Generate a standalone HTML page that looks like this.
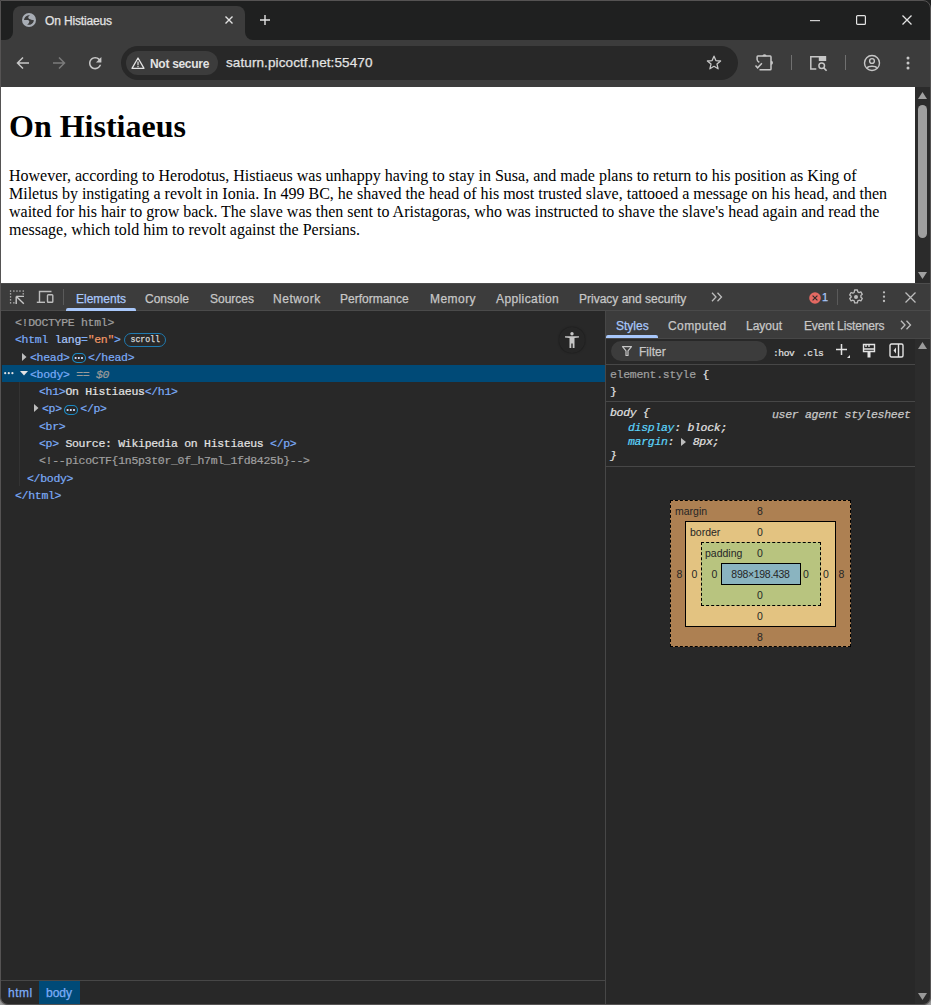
<!DOCTYPE html>
<html><head><meta charset="utf-8">
<style>
*{box-sizing:border-box;margin:0;padding:0}
html,body{width:931px;height:1005px;overflow:hidden;background:#1f2020;font-family:"Liberation Sans",sans-serif}
.a{position:absolute}
.t{position:absolute;white-space:nowrap;line-height:1;-webkit-text-stroke:0.25px currentColor}
.mono{font-family:"Liberation Mono",monospace}
svg{position:absolute;overflow:visible}
.bm{position:absolute;font-size:10.5px;line-height:11px;color:#262626;white-space:nowrap}.bm.c{transform:translateX(-50%)}
.row{position:absolute;height:17px;line-height:17px;white-space:pre;-webkit-text-stroke:0.2px currentColor}
.tg{color:#7cacf8}.an{color:#a8c7fa}.av{color:#f29766}.tx{color:#e3e3e3}.dt{color:#a0a0a0}.eq{color:#9a9a9a;font-style:italic}
.sp{display:inline-block;width:18.5px}
.ell{display:inline-block;position:relative;width:13.5px;height:9px;border:1px solid #1a7ab3;border-radius:4.5px;vertical-align:-1px;margin:0 1.6px 0 3px}.ell:after{content:"";position:absolute;left:2.6px;top:3.2px;width:1.7px;height:1.7px;background:#d0d0d0;box-shadow:2.7px 0 #d0d0d0,5.4px 0 #d0d0d0}
</style></head><body>
<!-- window border -->
<div class="a" style="left:0;top:0;width:931px;height:1005px;border:1px solid #555353;border-radius:0 8px 8px 8px;z-index:50;pointer-events:none"></div>
<div class="a" style="left:0;top:997px;width:8px;height:8px;z-index:60;background:radial-gradient(circle at 100% 0,transparent 6.8px,#555353 7.6px,#8f8f8f 8.6px,#a0a0a0 10px)"></div>
<div class="a" style="left:923px;top:997px;width:8px;height:8px;z-index:60;background:radial-gradient(circle at 0 0,transparent 6.8px,#555353 7.6px,#8f8f8f 8.6px,#a0a0a0 10px)"></div>

<!-- TAB STRIP -->
<div class="a" style="left:0;top:0;width:931px;height:40px;background:#1f2020"></div>
<!-- active tab -->
<div class="a" style="left:13px;top:6px;width:232px;height:34px;background:#3c3c3c;border-radius:8px 8px 0 0"></div>
<!-- flares -->
<div class="a" style="left:1px;top:28px;width:12px;height:12px;background:#3c3c3c"></div>
<div class="a" style="left:1px;top:24px;width:12px;height:16px;background:#1f2020;border-radius:0 0 8px 0"></div>
<div class="a" style="left:245px;top:28px;width:12px;height:12px;background:#3c3c3c"></div>
<div class="a" style="left:245px;top:24px;width:12px;height:16px;background:#1f2020;border-radius:0 0 0 8px"></div>
<!-- globe -->
<svg style="left:20px;top:11px" width="18" height="18" viewBox="0 0 18 18">
 <circle cx="9" cy="9" r="7" fill="#a8adb5"/>
 <path d="M4 8.9C4.5 6.5 6.3 4.2 10 4.1C8.9 5 8.2 5.8 8.3 6.8C8.6 7.9 10 8.3 11.2 8.7C12.2 9 13.2 9.1 13.9 9.2C13.7 11.2 12.3 12.9 10.2 13.8L7.1 13.8C8.4 12.9 9.3 11.6 9.3 10.6C9.2 9.6 8.3 9.1 7.4 9.1Z" fill="#3c3c3c"/>
</svg>
<div class="t" style="left:45px;top:14.6px;font-size:12px;letter-spacing:-0.15px;color:#e3e3e3">On Histiaeus</div>
<!-- tab close -->
<svg style="left:225px;top:16px" width="8" height="8" viewBox="0 0 8 8"><path d="M0.5 0.5L7.5 7.5M7.5 0.5L0.5 7.5" stroke="#e3e3e3" stroke-width="1.4"/></svg>
<!-- new tab plus -->
<svg style="left:260px;top:15px" width="10" height="10" viewBox="0 0 10 10"><path d="M5 0V10M0 5H10" stroke="#e3e3e3" stroke-width="1.4"/></svg>
<!-- window controls -->
<svg style="left:810px;top:19.5px" width="10" height="2"><rect width="10" height="1.2" fill="#cfcfcf"/></svg>
<svg style="left:856px;top:15px" width="10" height="10"><rect x="0.6" y="0.6" width="8.8" height="8.8" rx="1" fill="none" stroke="#e3e3e3" stroke-width="1.2"/></svg>
<svg style="left:902px;top:15px" width="10" height="10"><path d="M0.5 0.5L9.5 9.5M9.5 0.5L0.5 9.5" stroke="#e3e3e3" stroke-width="1.3"/></svg>

<!-- TOOLBAR -->
<div class="a" style="left:0;top:40px;width:931px;height:47px;background:#3c3c3c"></div>
<!-- back -->
<svg style="left:16px;top:56px" width="14" height="14" viewBox="0 0 14 14"><path d="M13 7H1.5M7 1.5L1.5 7L7 12.5" fill="none" stroke="#c7c7c7" stroke-width="1.5"/></svg>
<!-- forward -->
<svg style="left:52px;top:56px" width="14" height="14" viewBox="0 0 14 14"><path d="M1 7H12.5M7 1.5L12.5 7L7 12.5" fill="none" stroke="#7b7b7b" stroke-width="1.5"/></svg>
<!-- reload -->
<svg style="left:88.9px;top:57.3px" width="12.4" height="12.4" viewBox="4 4 16 16"><path d="M17.65 6.35C16.2 4.9 14.21 4 12 4c-4.42 0-7.99 3.58-7.99 8s3.57 8 7.99 8c3.73 0 6.84-2.55 7.73-6h-2.08c-.82 2.33-3.04 4-5.65 4-3.31 0-6-2.69-6-6s2.69-6 6-6c1.66 0 3.14.69 4.22 1.78L13 11h7V4l-2.35 2.35z" fill="#c7c7c7"/></svg>
<!-- omnibox -->
<div class="a" style="left:121px;top:46px;width:617px;height:34px;background:#282828;border-radius:17px"></div>
<div class="a" style="left:126px;top:51px;width:92px;height:24px;background:#3c3c3c;border-radius:12px"></div>
<svg style="left:131px;top:57px" width="14" height="12" viewBox="0 0 14 12"><path d="M7 1L13 11.3H1Z" fill="none" stroke="#e3e3e3" stroke-width="1.3" stroke-linejoin="round"/><rect x="6.4" y="4.5" width="1.2" height="3.8" fill="#e3e3e3"/><rect x="6.4" y="9" width="1.2" height="1.2" fill="#e3e3e3"/></svg>
<div class="t" style="left:150px;top:57.7px;font-size:12px;letter-spacing:-0.3px;font-weight:bold;color:#e3e3e3;-webkit-text-stroke:0">Not secure</div>
<div class="t" style="left:226px;top:56.1px;font-size:13.5px;letter-spacing:0.1px;color:#e3e3e3">saturn.picoctf.net:55470</div>
<!-- star -->
<svg style="left:706px;top:55px" width="16" height="16" viewBox="0 0 16 16"><path d="M8 1.2L9.9 5.6L14.6 6L11 9.1L12.1 13.8L8 11.3L3.9 13.8L5 9.1L1.4 6L6.1 5.6Z" fill="none" stroke="#c7c7c7" stroke-width="1.3" stroke-linejoin="round"/></svg>
<!-- extension puzzle -->
<svg style="left:750px;top:50px" width="30" height="26" viewBox="0 0 30 26"><path d="M9.3 12.4C8 11.6 7.1 10.8 7.1 9.5V6.9Q7.1 6.1 7.9 6.1H20.2Q21 6.1 21 6.9V18.9Q21 19.7 20.2 19.7H9.5" fill="none" stroke="#c7c7c7" stroke-width="1.5"/><path d="M12.4 6.3A2.1 2.1 0 0 1 16.6 6.3Z" fill="#c7c7c7"/><path d="M20.9 10.7A2.1 2.1 0 0 1 20.9 14.9Z" fill="#c7c7c7"/><path d="M5.5 15.5L7.6 17.8L11.9 13.3" fill="none" stroke="#c7c7c7" stroke-width="1.5"/></svg>
<div class="a" style="left:791px;top:55px;width:1px;height:15px;background:#707070"></div>
<!-- cast/search -->
<svg style="left:804px;top:50px" width="30" height="26" viewBox="0 0 30 26"><path d="M12.3 19H6.8V6.8H22" fill="none" stroke="#c7c7c7" stroke-width="1.5"/><rect x="14.8" y="6.1" width="7.4" height="4.9" fill="#c7c7c7"/><circle cx="17.7" cy="15.8" r="2.8" fill="none" stroke="#c7c7c7" stroke-width="1.5"/><path d="M19.8 17.9L22.6 20.7" stroke="#c7c7c7" stroke-width="1.6"/></svg>
<div class="a" style="left:845px;top:55px;width:1px;height:15px;background:#707070"></div>
<!-- profile -->
<svg style="left:863px;top:54px" width="18" height="18" viewBox="0 0 18 18"><circle cx="9" cy="9" r="7.5" fill="none" stroke="#c7c7c7" stroke-width="1.4"/><circle cx="9" cy="7" r="2.4" fill="none" stroke="#c7c7c7" stroke-width="1.4"/><path d="M4.2 13.8C5.5 11.8 12.5 11.8 13.8 13.8" fill="none" stroke="#c7c7c7" stroke-width="1.4"/></svg>
<!-- kebab -->
<svg style="left:906px;top:56px" width="4" height="14"><circle cx="2" cy="2" r="1.5" fill="#c7c7c7"/><circle cx="2" cy="7" r="1.5" fill="#c7c7c7"/><circle cx="2" cy="12" r="1.5" fill="#c7c7c7"/></svg>

<!-- PAGE -->
<div class="a" style="left:1px;top:87px;width:914px;height:196px;background:#fff;overflow:hidden;font-family:'Liberation Serif',serif;color:#000">
  <div style="margin:8px">
    <h1 style="font-size:32px;font-weight:bold;margin:21.44px 0">On Histiaeus</h1>
    <p style="font-size:16px;margin:16px 0;width:898px">However, according to Herodotus, Histiaeus was unhappy having to stay in Susa, and made plans to return to his position as King of Miletus by instigating a revolt in Ionia. In 499 BC, he shaved the head of his most trusted slave, tattooed a message on his head, and then waited for his hair to grow back. The slave was then sent to Aristagoras, who was instructed to shave the slave's head again and read the message, which told him to revolt against the Persians.</p>
  </div>
</div>
<!-- page scrollbar -->
<div class="a" style="left:915px;top:87px;width:15px;height:196px;background:#2b2b2b"></div>
<div class="a" style="left:918px;top:105px;width:9px;height:133px;background:#9f9f9f;border-radius:4.5px"></div>
<svg style="left:918px;top:92px" width="9" height="7"><path d="M0 7L4.5 0L9 7Z" fill="#a0a0a0"/></svg>
<svg style="left:918px;top:272px" width="9" height="7"><path d="M0 0L4.5 7L9 0Z" fill="#a0a0a0"/></svg>
<!-- DEVTOOLS -->
<div class="a" style="left:0;top:283px;width:931px;height:722px;background:#282828"></div>
<div class="a" style="left:0;top:283px;width:931px;height:1px;background:#4d4d4d"></div>
<div class="a" style="left:0;top:284px;width:931px;height:26px;background:#3c3c3c"></div>
<div class="a" style="left:0;top:310px;width:931px;height:1px;background:#4a4a4a"></div>


<!-- devtools toolbar icons -->
<svg style="left:0;top:284px" width="30" height="28" viewBox="0 0 30 28">
 <g fill="#bdbdbd">
  <rect x="9.9" y="6.4" width="1.3" height="1.3"/><rect x="13.2" y="6.4" width="1.3" height="1.3"/><rect x="16.3" y="6.4" width="1.3" height="1.3"/><rect x="19.3" y="6.4" width="1.3" height="1.3"/><rect x="22.6" y="6.4" width="1.3" height="1.3"/>
  <rect x="9.9" y="9.2" width="1.3" height="1.3"/><rect x="22.6" y="9.2" width="1.3" height="1.3"/>
  <rect x="9.9" y="12.2" width="1.3" height="1.3"/><rect x="9.9" y="15.2" width="1.3" height="1.3"/><rect x="9.9" y="18.2" width="1.3" height="1.3"/><rect x="13.2" y="18.2" width="1.3" height="1.3"/>
 </g>
 <path d="M16.2 12.4H24M16.2 12.4V20M16.4 12.6L23.8 19.8" fill="none" stroke="#c7c7c7" stroke-width="1.4"/>
</svg>
<svg style="left:36px;top:290px" width="18" height="14" viewBox="0 0 18 14">
 <path d="M15.5 1.5H3.5V12.3" fill="none" stroke="#bdbdbd" stroke-width="1.4"/>
 <path d="M0.8 12.3H9" stroke="#bdbdbd" stroke-width="1.4"/>
 <rect x="11.5" y="4.7" width="5.3" height="7.6" rx="0.8" fill="none" stroke="#bdbdbd" stroke-width="1.4"/>
</svg>
<div class="a" style="left:63px;top:289px;width:1px;height:16px;background:#5a5a5a"></div>
<div class="t" style="left:76px;top:292.8px;font-size:12px;color:#a8c7fa">Elements</div>
<div class="a" style="left:66px;top:308px;width:70px;height:3px;background:#a8c7fa;border-radius:2px 2px 0 0"></div>
<div class="t" style="left:145px;top:292.8px;font-size:12px;color:#c7c7c7">Console</div>
<div class="t" style="left:210px;top:292.8px;font-size:12px;color:#c7c7c7">Sources</div>
<div class="t" style="left:273px;top:292.8px;font-size:12px;letter-spacing:0.55px;color:#c7c7c7">Network</div>
<div class="t" style="left:340px;top:292.8px;font-size:12px;color:#c7c7c7">Performance</div>
<div class="t" style="left:430px;top:292.8px;font-size:12px;letter-spacing:0.45px;color:#c7c7c7">Memory</div>
<div class="t" style="left:496px;top:292.8px;font-size:12px;letter-spacing:0.4px;color:#c7c7c7">Application</div>
<div class="t" style="left:579px;top:292.8px;font-size:12px;color:#c7c7c7">Privacy and security</div>
<svg style="left:711px;top:292px" width="12" height="10" viewBox="0 0 12 10"><path d="M1 0.8L5 5L1 9.2M6.5 0.8L10.5 5L6.5 9.2" fill="none" stroke="#bdbdbd" stroke-width="1.3"/></svg>
<svg style="left:809px;top:291.5px" width="12" height="12" viewBox="0 0 12 12"><circle cx="6" cy="6" r="5.8" fill="#e46962"/><path d="M3.6 3.6L8.4 8.4M8.4 3.6L3.6 8.4" stroke="#2a2a2a" stroke-width="1.1"/></svg>
<div class="t" style="left:822px;top:292px;font-size:11px;color:#a8c7fa">1</div>
<div class="a" style="left:837px;top:289px;width:1px;height:16px;background:#5a5a5a"></div>
<svg style="left:848px;top:289px" width="16" height="16" viewBox="0 0 16 16"><path d="M6.6 1h2.8l.4 1.9 1.3.7 1.8-.7 1.4 2.4-1.4 1.3v1.6l1.4 1.3-1.4 2.4-1.8-.7-1.3.7-.4 1.9H6.6l-.4-1.9-1.3-.7-1.8.7-1.4-2.4 1.4-1.3V7.2L1.7 5.9l1.4-2.4 1.8.7 1.3-.7z" fill="none" stroke="#bdbdbd" stroke-width="1.3" stroke-linejoin="round"/><circle cx="8" cy="8" r="2" fill="#bdbdbd"/></svg>
<svg style="left:882px;top:289px" width="4" height="16"><circle cx="2" cy="3.3" r="1.15" fill="#bdbdbd"/><circle cx="2" cy="7.7" r="1.15" fill="#bdbdbd"/><circle cx="2" cy="12" r="1.15" fill="#bdbdbd"/></svg>
<svg style="left:905px;top:292px" width="11" height="11" viewBox="0 0 11 11"><path d="M0.5 0.5L10.5 10.5M10.5 0.5L0.5 10.5" fill="none" stroke="#bdbdbd" stroke-width="1.3"/></svg>

<!-- DOM tree -->
<div class="a" style="left:2px;top:365px;width:603px;height:17px;background:#004a77"></div>
<div class="a" style="left:19px;top:382px;width:1px;height:104px;background:#333333"></div>
<div class="a mono" style="left:0;top:314.2px;width:605px;font-size:11.5px;letter-spacing:-0.3px;color:#a8c7fa">
 <div class="row" style="top:0px;left:15px"><span class="dt">&lt;!DOCTYPE html&gt;</span></div>
 <div class="row" style="top:17.26px;left:15px"><span class="tg">&lt;html</span> <span class="an">lang</span><span class="tg">=</span><span class="av">"en"</span><span class="tg">&gt;</span></div>
 <div class="row" style="top:34.52px;left:30px"><span class="tg">&lt;head&gt;</span><span class="sp"></span><span class="tg">&lt;/head&gt;</span></div>
 <div class="row" style="top:51.78px;left:30px"><span class="tg">&lt;body&gt;</span> <span class="eq">== $0</span></div>
 <div class="row" style="top:69.04px;left:39px"><span class="tg">&lt;h1&gt;</span><span class="tx">On Histiaeus</span><span class="tg">&lt;/h1&gt;</span></div>
 <div class="row" style="top:86.3px;left:42px"><span class="tg">&lt;p&gt;</span><span class="sp"></span><span class="tg">&lt;/p&gt;</span></div>
 <div class="row" style="top:103.56px;left:39px"><span class="tg">&lt;br&gt;</span></div>
 <div class="row" style="top:120.82px;left:39px"><span class="tg">&lt;p&gt;</span><span class="tx"> Source: Wikipedia on Histiaeus </span><span class="tg">&lt;/p&gt;</span></div>
 <div class="row" style="top:138.08px;left:39px"><span class="dt">&lt;!--picoCTF{1n5p3t0r_0f_h7ml_1fd8425b}--&gt;</span></div>
 <div class="row" style="top:155.34px;left:27px"><span class="tg">&lt;/body&gt;</span></div>
 <div class="row" style="top:172.6px;left:15px"><span class="tg">&lt;/html&gt;</span></div>
</div>

<!-- dom extras -->
<svg style="left:72.3px;top:353px" width="14" height="10" viewBox="0 0 14 10"><rect x="0.5" y="0.5" width="13" height="9" rx="4.5" fill="none" stroke="#1a8ac4" stroke-width="1.1"/><rect x="2.7" y="4" width="1.8" height="2" fill="#c8d8f8"/><rect x="5.9" y="4" width="1.8" height="2" fill="#c8d8f8"/><rect x="9.1" y="4" width="1.8" height="2" fill="#c8d8f8"/></svg>
<svg style="left:64px;top:405px" width="14" height="10" viewBox="0 0 14 10"><rect x="0.5" y="0.5" width="13" height="9" rx="4.5" fill="none" stroke="#1a8ac4" stroke-width="1.1"/><rect x="2.7" y="4" width="1.8" height="2" fill="#c8d8f8"/><rect x="5.9" y="4" width="1.8" height="2" fill="#c8d8f8"/><rect x="9.1" y="4" width="1.8" height="2" fill="#c8d8f8"/></svg>
<div class="a" style="left:124px;top:333px;width:42px;height:14px;border:1px solid #1f7ab0;border-radius:7px"></div>
<div class="t mono" style="left:130.5px;top:336px;font-size:8.3px;letter-spacing:-0.1px;color:#d8d8d8">scroll</div>
<svg style="left:22px;top:353px" width="5" height="8"><path d="M0 0L4.5 4L0 8Z" fill="#bdbdbd"/></svg>
<svg style="left:20px;top:371px" width="8" height="5"><path d="M0 0L8 0L4 4.5Z" fill="#e3e3e3"/></svg>
<svg style="left:4px;top:372px" width="10" height="3"><circle cx="1.2" cy="1.2" r="1.1" fill="#e3e3e3"/><circle cx="4.8" cy="1.2" r="1.1" fill="#e3e3e3"/><circle cx="8.4" cy="1.2" r="1.1" fill="#e3e3e3"/></svg>
<svg style="left:34px;top:404px" width="5" height="8"><path d="M0 0L4.5 4L0 8Z" fill="#bdbdbd"/></svg>
<!-- accessibility button -->
<div class="a" style="left:559px;top:327px;width:26px;height:26px;border-radius:13px;background:#262626;box-shadow:0 0 2px rgba(0,0,0,0.5)"></div>
<svg style="left:565px;top:332px" width="14" height="16" viewBox="0 0 14 16"><circle cx="7" cy="1.8" r="1.7" fill="#c7c7c7"/><path d="M0 4.2L14 4.2L14 5.6L9.5 6V16H7.7V11.5H6.3V16H4.5V6L0 5.6Z" fill="#c7c7c7"/></svg>

<!-- splitter -->
<div class="a" style="left:605px;top:311px;width:1px;height:694px;background:#474747"></div>

<!-- STYLES PANE -->
<div class="a" style="left:606px;top:311px;width:324px;height:27px;background:#3c3c3c"></div>
<div class="t" style="left:616px;top:320px;font-size:12px;color:#a8c7fa">Styles</div>
<div class="a" style="left:606px;top:335px;width:52px;height:3px;background:#a8c7fa;border-radius:2px 2px 0 0"></div>
<div class="t" style="left:668px;top:320px;font-size:12px;letter-spacing:0.4px;color:#c7c7c7">Computed</div>
<div class="t" style="left:746px;top:320px;font-size:12px;color:#c7c7c7">Layout</div>
<div class="t" style="left:804px;top:320px;font-size:12px;letter-spacing:-0.15px;color:#c7c7c7">Event Listeners</div>
<svg style="left:900px;top:320px" width="12" height="10" viewBox="0 0 12 10"><path d="M1 0.8L5 5L1 9.2M6.5 0.8L10.5 5L6.5 9.2" fill="none" stroke="#bdbdbd" stroke-width="1.3"/></svg>
<div class="a" style="left:606px;top:338px;width:324px;height:1px;background:#474747"></div>
<div class="a" style="left:611px;top:341px;width:156px;height:20px;border-radius:10px;background:#3c3c3c"></div>
<svg style="left:622px;top:346px" width="10" height="10" viewBox="0 0 10 10"><path d="M0.5 0.7H9.5L6 4.8V9.5H4V4.8Z" fill="none" stroke="#c7c7c7" stroke-width="1.2" stroke-linejoin="round"/></svg>
<div class="t" style="left:639px;top:346px;font-size:12px;color:#c7c7c7">Filter</div>
<div class="t mono" style="left:773px;top:348.5px;font-size:9.6px;letter-spacing:-0.4px;color:#e3e3e3;-webkit-text-stroke:0.2px #e3e3e3">:hov</div>
<div class="t mono" style="left:802px;top:348.5px;font-size:9.6px;letter-spacing:-0.4px;color:#e3e3e3;-webkit-text-stroke:0.2px #e3e3e3">.cls</div>
<svg style="left:835px;top:343px" width="16" height="16" viewBox="0 0 16 16"><path d="M6.5 1V12M1 6.5H12" stroke="#e3e3e3" stroke-width="1.5"/><path d="M15 12V15H12Z" fill="#e3e3e3"/></svg>
<svg style="left:862px;top:343px" width="14" height="16" viewBox="0 0 14 16"><path d="M1.5 1.5H12.5V8.5H1.5Z" fill="none" stroke="#e3e3e3" stroke-width="1.4"/><path d="M4 1.5V4M7 1.5V4M1.5 6H12.5" stroke="#e3e3e3" stroke-width="1.3"/><path d="M5.5 8.5H8.5V14.5H5.5Z" fill="#e3e3e3"/></svg>
<svg style="left:889px;top:343px" width="15" height="15" viewBox="0 0 15 15"><rect x="1" y="1" width="13" height="13" rx="1.5" fill="none" stroke="#e3e3e3" stroke-width="1.4"/><path d="M9.5 1V14" stroke="#e3e3e3" stroke-width="1.4"/><path d="M7 4.5L4.5 7.5L7 10.5Z" fill="#e3e3e3"/></svg>
<div class="a" style="left:606px;top:364px;width:309px;height:1px;background:#474747"></div>
<!-- styles scrollbar -->
<div class="a" style="left:915px;top:339px;width:15px;height:666px;background:#2c2c2c"></div>
<svg style="left:918px;top:342px" width="9" height="7"><path d="M0 7L4.5 0L9 7Z" fill="#9a9a9a"/></svg>
<svg style="left:918px;top:993px" width="9" height="7"><path d="M0 0L4.5 7L9 0Z" fill="#9a9a9a"/></svg>

<div class="a mono" style="left:610px;top:0;width:300px;font-size:11.5px;letter-spacing:-0.3px;color:#e3e3e3">
 <div class="row" style="top:365.5px;left:0"><span style="color:#a0a0a0">element.style</span> {</div>
 <div class="row" style="top:382.5px;left:0">}</div>
 <div class="row" style="top:404px;left:0;font-style:italic">body {</div>
 <div class="row" style="top:419px;left:18px;font-style:italic"><span style="color:#5cd5fb">display</span>: block;</div>
 <div class="row" style="top:432.5px;left:18px;font-style:italic"><span style="color:#5cd5fb">margin</span>:<span style="display:inline-block;width:18.5px"></span>8px;</div>
 <div class="row" style="top:447px;left:0;font-style:italic">}</div>
</div>
<div class="t mono" style="left:772px;top:408.7px;font-size:11.5px;letter-spacing:-0.3px;color:#c7c7c7;font-style:italic">user agent stylesheet</div>
<svg style="left:681px;top:437.5px" width="5" height="8"><path d="M0 0L5 4L0 8Z" fill="#bdbdbd"/></svg>
<div class="a" style="left:606px;top:401px;width:309px;height:1px;background:#474747"></div>
<div class="a" style="left:606px;top:466px;width:309px;height:1px;background:#474747"></div>

<!-- BOX MODEL -->
<div class="a" style="left:670px;top:500px;width:181px;height:147px;background:#ad8052;border:1px dashed #000"></div>
<div class="a" style="left:685px;top:521px;width:151px;height:106px;background:#e3c381;border:1px solid #000"></div>
<div class="a" style="left:701px;top:542px;width:120px;height:64px;background:#b8c47f;border:1px dashed #000"></div>
<div class="a" style="left:721px;top:563px;width:80px;height:22px;background:#8ab4c0;border:1px solid #000"></div>
<div class="bm" style="left:675px;top:506px">margin</div>
<div class="bm c" style="left:760px;top:506px">8</div>
<div class="bm" style="left:690px;top:527px">border</div>
<div class="bm c" style="left:760px;top:527px">0</div>
<div class="bm" style="left:705px;top:548px">padding</div>
<div class="bm c" style="left:760px;top:548px">0</div>
<div class="bm c" style="left:760.5px;top:569px;letter-spacing:-0.3px">898×198.438</div>
<div class="bm c" style="left:679.5px;top:569px">8</div>
<div class="bm c" style="left:694.5px;top:569px">0</div>
<div class="bm c" style="left:714.5px;top:569px">0</div>
<div class="bm c" style="left:806px;top:569px">0</div>
<div class="bm c" style="left:826px;top:569px">0</div>
<div class="bm c" style="left:841.5px;top:569px">8</div>
<div class="bm c" style="left:760px;top:590px">0</div>
<div class="bm c" style="left:760px;top:611px">0</div>
<div class="bm c" style="left:760px;top:632px">8</div>

<!-- breadcrumbs -->
<div class="a" style="left:1px;top:980px;width:604px;height:1px;background:#474747"></div>
<div class="a" style="left:39px;top:981px;width:41px;height:23px;background:#004a77"></div>
<div class="t" style="left:8px;top:987px;font-size:12px;letter-spacing:0.5px;color:#7cacf8">html</div>
<div class="t" style="left:46px;top:987px;font-size:12px;color:#7cacf8">body</div>

</body></html>
